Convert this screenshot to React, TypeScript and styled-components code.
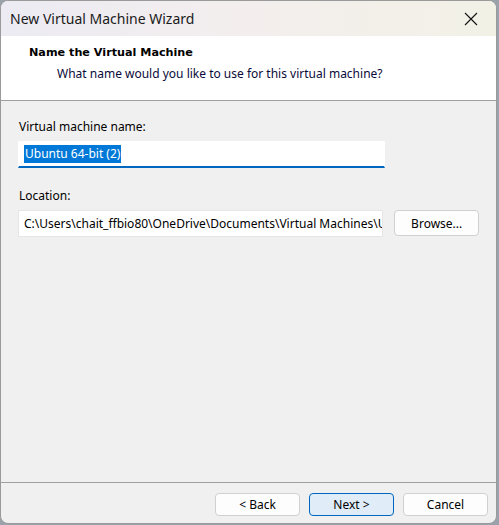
import React from "react";
import styled, { createGlobalStyle } from "styled-components";

const GlobalStyle = createGlobalStyle`
  *, *::before, *::after {
    box-sizing: border-box;
  }
  html, body {
    margin: 0;
    padding: 0;
    background: #9aa3ab;
  }
  body {
    font-family: "Noto Sans", "Open Sans", sans-serif;
    font-size: 12px;
    color: #000;
  }
`;

const Window = styled.div`
  width: 497px;
  height: 524px;
  border: 1px solid #9a9a9a;
  border-radius: 8px;
  overflow: hidden;
  background: #f0f0f0;
  display: flex;
  flex-direction: column;
`;

const TitleBar = styled.div`
  height: 35px;
  flex: none;
  display: flex;
  align-items: center;
  justify-content: space-between;
  padding: 0 0 0 9px;
  background: linear-gradient(90deg, #ecebf3 0%, #f3eeee 45%, #f2f1e6 100%);
`;

const Title = styled.span`
  font-size: 14px;
  color: #1a1a1a;
`;

const CloseButton = styled.button`
  width: 46px;
  height: 35px;
  border: none;
  background: transparent;
  display: flex;
  align-items: center;
  justify-content: center;
  padding: 0;
  margin-right: 2px;
`;

const Header = styled.div`
  height: 65px;
  flex: none;
  background: #fff;
  border-bottom: 1px solid #a0a0a0;
  padding: 9px 0 0 28px;
`;

const HeaderTitle = styled.div`
  font-family: "DejaVu Sans", Verdana, sans-serif;
  font-weight: bold;
  font-size: 11.2px;
  line-height: 16px;
  color: #000;
`;

const HeaderText = styled.div`
  margin: 5px 0 0 28px;
  line-height: 16px;
  color: #0a0a3a;
`;

const Body = styled.div`
  flex: 1;
  padding: 18px 17px 0 17px;
  display: flex;
  flex-direction: column;
`;

const Label = styled.label`
  display: block;
  padding-left: 1px;
  line-height: 16px;
  margin-bottom: 6px;
`;

const Row = styled.div`
  display: flex;
  align-items: flex-start;
  gap: 11px;
`;

const Field = styled.div<{ $focused?: boolean }>`
  width: 367px;
  height: 27px;
  background: #fff;
  border: 1px solid ${(p) => (p.$focused ? "#fff" : "#e6e6e6")};
  border-bottom: ${(p) => (p.$focused ? "2px solid #0067c0" : "1px solid #e6e6e6")};
  padding: 0 0 0 5px;
  display: flex;
  align-items: center;
  overflow: hidden;
  white-space: nowrap;
`;

const Selected = styled.span`
  background: #0078d7;
  color: #fff;
  padding: 1px 1px;
  line-height: 16px;
`;

const Button = styled.button<{ $primary?: boolean }>`
  width: 85px;
  height: 23px;
  font-family: inherit;
  font-size: 12px;
  color: #000;
  border-radius: 4px;
  border: 1px solid ${(p) => (p.$primary ? "#0067c0" : "#d0d0d0")};
  background: ${(p) => (p.$primary ? "#e0edf9" : "#fdfdfd")};
  padding: 0;
`;

const BrowseButton = styled(Button)`
  height: 26px;
`;

const Spacer = styled.div`
  height: 20px;
`;

const Footer = styled.div`
  flex: none;
  height: 41px;
  border-top: 1px solid #a0a0a0;
  display: flex;
  justify-content: flex-end;
  align-items: flex-start;
  gap: 9px;
  padding: 10px 8px 0 0;
`;

export default function App() {
  return (
    <>
      <GlobalStyle />
      <Window>
        <TitleBar>
          <Title>New Virtual Machine Wizard</Title>
          <CloseButton aria-label="Close">
            <svg width="14" height="14" viewBox="0 0 14 14">
              <path d="M1 1 L13 13 M13 1 L1 13" stroke="#111" strokeWidth="1.1" />
            </svg>
          </CloseButton>
        </TitleBar>
        <Header>
          <HeaderTitle>Name the Virtual Machine</HeaderTitle>
          <HeaderText>What name would you like to use for this virtual machine?</HeaderText>
        </Header>
        <Body>
          <Label>Virtual machine name:</Label>
          <Field $focused>
            <Selected>Ubuntu 64-bit (2)</Selected>
          </Field>
          <Spacer />
          <Label>Location:</Label>
          <Row>
            <Field>C:\Users\chait_ffbio80\OneDrive\Documents\Virtual Machines\Ubuntu 64-bit (2)</Field>
            <BrowseButton>Browse...</BrowseButton>
          </Row>
        </Body>
        <Footer>
          <Button>&lt; Back</Button>
          <Button $primary>Next &gt;</Button>
          <Button>Cancel</Button>
        </Footer>
      </Window>
    </>
  );
}
